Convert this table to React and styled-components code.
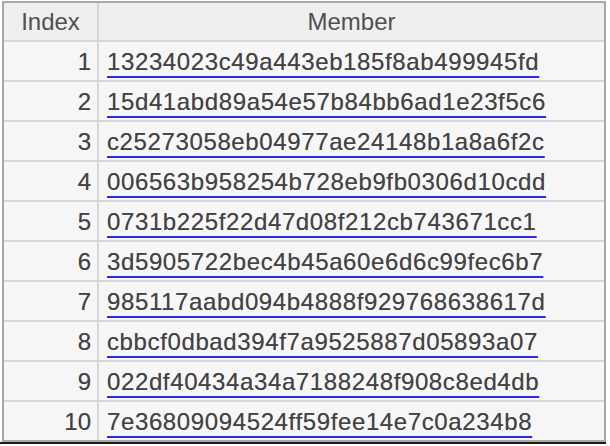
import React from 'react';
import styled, { createGlobalStyle } from 'styled-components';

const GlobalStyle = createGlobalStyle`
  body {
    margin: 0;
    background: #ffffff;
    font-family: "Liberation Sans", Arial, sans-serif;
  }
`;

const Page = styled.div`
  padding: 1px 0 0 2px;
  width: 606px;
`;

const Grid = styled.div`
  display: grid;
  grid-template-columns: 93px 1fr;
  grid-auto-rows: 38px;
  grid-template-rows: 37px;
  gap: 2px;
  width: 600px;
  background: #d6d6d6;
  border: 2px solid #a8a8a8;
`;

const HeadCell = styled.div`
  background: #efefef;
  color: #505050;
  font-size: 24px;
  display: flex;
  align-items: center;
  justify-content: center;
`;

const Cell = styled.div`
  background: #f6f6f6;
  color: #434343;
  font-size: 24px;
  display: flex;
  align-items: center;
  justify-content: ${(p) => (p.right ? 'flex-end' : 'flex-start')};
  padding: ${(p) => (p.right ? '1px 6px 0 0' : '1px 0 0 8px')};
  text-shadow: 0 0 0.4px rgba(60, 60, 60, 0.6);
`;

const Member = styled.span`
  letter-spacing: 0.62px;
  text-decoration: underline;
  text-decoration-color: #2d2de0;
  text-decoration-thickness: 2px;
  text-underline-offset: 6px;
`;

const BottomRule = styled.div`
  height: 2px;
  width: 606px;
  margin-left: -2px;
  background: #1a1a1a;
`;

const members = [
  '13234023c49a443eb185f8ab499945fd',
  '15d41abd89a54e57b84bb6ad1e23f5c6',
  'c25273058eb04977ae24148b1a8a6f2c',
  '006563b958254b728eb9fb0306d10cdd',
  '0731b225f22d47d08f212cb743671cc1',
  '3d5905722bec4b45a60e6d6c99fec6b7',
  '985117aabd094b4888f929768638617d',
  'cbbcf0dbad394f7a9525887d05893a07',
  '022df40434a34a7188248f908c8ed4db',
  '7e36809094524ff59fee14e7c0a234b8',
];

export default function App() {
  return (
    <Page>
      <GlobalStyle />
      <Grid>
        <HeadCell>Index</HeadCell>
        <HeadCell>Member</HeadCell>
        {members.map((m, i) => (
          <React.Fragment key={m}>
            <Cell right>{i + 1}</Cell>
            <Cell>
              <Member>{m}</Member>
            </Cell>
          </React.Fragment>
        ))}
      </Grid>
      <BottomRule />
    </Page>
  );
}
